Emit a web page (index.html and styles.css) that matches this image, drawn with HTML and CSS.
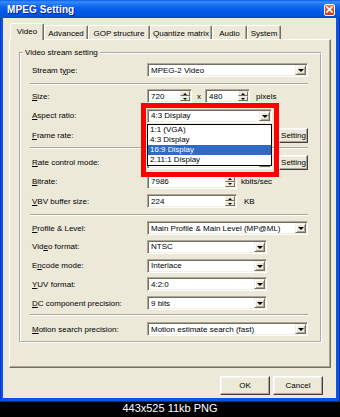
FILE: index.html
```html
<!DOCTYPE html>
<html>
<head>
<meta charset="utf-8">
<title>MPEG Setting</title>
<link rel="stylesheet" href="styles.css">
</head>
<body>
<div class="window">
  <div class="titlebar">
    <span class="title">MPEG Setting</span>
    <span class="close"><svg width="7" height="7" viewBox="0 0 7 7"><path d="M1 1L6 6M6 1L1 6" stroke="#fff" stroke-width="1.6" stroke-linecap="square"/></svg></span>
  </div>
  <div class="frame">
    <div class="client">
      <div class="tabs">
        <div class="tab active t-video">Video</div>
        <div class="tab t-adv">Advanced</div>
        <div class="tab t-gop">GOP structure</div>
        <div class="tab t-quant">Quantize matrix</div>
        <div class="tab t-audio">Audio</div>
        <div class="tab t-sys">System</div>
      </div>
      <div class="panel">
        <fieldset class="group">
          <legend>Video stream setting</legend>
          <div class="rows">
            <div class="sec s1">
              <div class="row"><span class="lbl">Stream t<u>y</u>pe:</span><div class="combo w-wide"><span class="val">MPEG-2 Video</span><span class="dd"></span></div></div>
            </div>
            <div class="sep sep1"></div>
            <div class="sec s2">
              <div class="row"><span class="lbl"><u>S</u>ize:</span><div class="spin w-size"><span class="val">720</span><span class="updown"><span class="up"></span><span class="down"></span></span></div><span class="unit u-x">x</span><div class="spin w-size"><span class="val">480</span><span class="updown"><span class="up"></span><span class="down"></span></span></div><span class="unit u-px">pixels</span></div>
              <div class="row"><span class="lbl"><u>A</u>spect ratio:</span><div class="combo w-mid"><span class="val">4:3 Display</span><span class="dd"></span></div></div>
              <div class="row"><span class="lbl"><u>F</u>rame rate:</span><div class="combo w-mid"><span class="val"></span><span class="dd"></span></div><button class="btn setting">Setting</button></div>
            </div>
            <div class="sep sep2"></div>
            <div class="sec s3">
              <div class="row"><span class="lbl"><u>R</u>ate control mode:</span><div class="combo w-mid"><span class="val"></span><span class="dd"></span></div><button class="btn setting">Setting</button></div>
              <div class="row"><span class="lbl"><u>B</u>itrate:</span><div class="spin w-rate"><span class="val">7986</span><span class="updown"><span class="up"></span><span class="down"></span></span></div><span class="unit u-kb">kbits/sec</span></div>
              <div class="row"><span class="lbl"><u>V</u>BV buffer size:</span><div class="spin w-rate"><span class="val">224</span><span class="updown"><span class="up"></span><span class="down"></span></span></div><span class="unit u-KB">KB</span></div>
            </div>
            <div class="sep sep3"></div>
            <div class="sec s4">
              <div class="row"><span class="lbl"><u>P</u>rofile &amp; Level:</span><div class="combo w-wide"><span class="val">Main Profile &amp; Main Level (MP@ML)</span><span class="dd"></span></div></div>
              <div class="row"><span class="lbl">Vid<u>e</u>o format:</span><div class="combo w-small"><span class="val">NTSC</span><span class="dd"></span></div></div>
              <div class="row"><span class="lbl">E<u>n</u>code mode:</span><div class="combo w-small"><span class="val">Interlace</span><span class="dd"></span></div></div>
              <div class="row"><span class="lbl"><u>Y</u>UV format:</span><div class="combo w-small"><span class="val">4:2:0</span><span class="dd"></span></div></div>
              <div class="row"><span class="lbl"><u>D</u>C component precision:</span><div class="combo w-small"><span class="val">9 bits</span><span class="dd"></span></div></div>
            </div>
            <div class="sep sep4"></div>
            <div class="sec s5">
              <div class="row"><span class="lbl"><u>M</u>otion search precision:</span><div class="combo w-wide"><span class="val">Motion estimate search (fast)</span><span class="dd"></span></div></div>
            </div>
          </div>
        </fieldset>
      </div>
      <div class="buttons">
        <button class="btn big">OK</button>
        <button class="btn big">Cancel</button>
      </div>
    </div>
  </div>
  <div class="droplist">
    <div class="item">1:1 (VGA)</div>
    <div class="item">4:3 Display</div>
    <div class="item sel">16:9 Display</div>
    <div class="item">2.11:1 Display</div>
  </div>
  <div class="redbox"></div>
</div>
<div class="caption">443x525 11kb PNG</div>
</body>
</html>
```

FILE: styles.css
```css
* { box-sizing: border-box; }
html, body { margin: 0; padding: 0; }
body {
  width: 340px;
  height: 417px;
  overflow: hidden;
  background: #000;
  font-family: "Liberation Sans", Arial, sans-serif;
  font-size: 8px;
  color: #000;
}

.window {
  position: relative;
  width: 340px;
  height: 402px;
  display: flex;
  flex-direction: column;
}

.titlebar {
  height: 18px;
  flex: 0 0 18px;
  display: flex;
  align-items: center;
  justify-content: space-between;
  padding: 0 5px 0 7px;
  background: linear-gradient(180deg, #0A5FEB 0px, #3C8DF7 2px, #2277F1 4px, #0A62EA 8px, #0058E6 12px, #0452DE 16px, #0349D2 18px);
}
.title {
  color: #fff;
  font-weight: bold;
  font-size: 10px;
  text-shadow: 1px 1px #0A2390;
  letter-spacing: 0.1px;
}
.close {
  width: 11px;
  height: 12px;
  margin-top: 1px;
  border: 1px solid #fff;
  border-radius: 2px;
  background: linear-gradient(180deg, #E8795A, #D84A22 60%, #C93E18);
  display: flex;
  align-items: center;
  justify-content: center;
}
.close svg { display: block; }

.frame {
  flex: 1;
  padding: 0 4px 4px 3px;
  background: #0A54E4;
  box-shadow: inset 1px 0 #0839C8, inset -1px 0 #0028A8, inset 0 -1px #0028A8;
}
.client {
  height: 100%;
  background: #ECE9D8;
  display: flex;
  flex-direction: column;
}

/* tabs */
.tabs {
  display: flex;
  align-items: flex-end;
  height: 16px;
  margin: 5px 0 0 7px;
}
.tab {
  height: 14px;
  padding-top: 1px;
  border: 1px solid;
  border-bottom: none;
  border-color: #fff #716F64 transparent #fff;
  border-radius: 2px 2px 0 0;
  box-shadow: inset -1px 0 #ACA899;
  display: flex;
  align-items: center;
  justify-content: center;
  white-space: nowrap;
  background: #ECE9D8;
}
.tab.active {
  height: 17px;
  margin-bottom: -1px;
  position: relative;
  z-index: 2;
  padding-top: 0;
  padding-bottom: 1px;
}
.t-video { width: 34px; }
.t-adv { width: 44px; }
.t-gop { width: 62px; }
.t-quant { width: 62px; }
.t-audio { width: 35px; }
.t-sys { width: 34px; }

.panel {
  width: 322px;
  height: 329px;
  margin-left: 6px;
  border: 1px solid;
  border-color: #fff #716F64 #716F64 #fff;
  box-shadow: inset -1px -1px #ACA899;
  display: flex;
  flex-direction: column;
}

.group {
  margin: 8px 8px 0 9px;
  padding: 0;
  min-width: 0;
  border: 2px groove #fff;
}
.group legend {
  margin-left: 2px;
  padding: 0 2px;
  font-size: 8px;
  line-height: 10px;
}
.rows {
  padding: 5px 12px 5px 9px;
}
.sec {
  display: flex;
  flex-direction: column;
}
.s2, .s3 { gap: 5.5px; }
.s4 { gap: 4.75px; }

.sep {
  height: 2px;
  border-top: 1px solid #ACA899;
  border-bottom: 1px solid #fff;
}
.sep1 { margin: 6px 0 4px; }
.sep2 { margin: 5px 0 6px; }
.sep3 { margin: 6px 0 5px; }
.sep4 { margin: 4px 0 6px; }

.row {
  display: flex;
  align-items: center;
  height: 14px;
}
.lbl {
  flex: 0 0 117px;
  padding-left: 2px;
  white-space: nowrap;
}

.combo, .spin {
  height: 14px;
  background: #fff;
  border: 1px solid;
  border-color: #ACA899 #fff #fff #ACA899;
  box-shadow: inset 1px 1px #716F64, inset -1px -1px #F1EFE2;
  display: flex;
  align-items: center;
  padding-left: 2px;
  flex: 0 0 auto;
}
.val {
  flex: 1;
  min-width: 0;
  overflow: hidden;
  white-space: nowrap;
  padding-left: 1px;
}
.w-wide { width: 161px; }
.w-mid { width: 125px; }
.w-small { width: 120px; }
.w-size { width: 45px; }
.w-rate { width: 90px; }

.dd {
  flex: 0 0 11px;
  height: 10px;
  margin-right: 1px;
  background: #ECE9D8;
  border: 1px solid;
  border-color: #F1EFE2 #716F64 #716F64 #F1EFE2;
  box-shadow: inset 1px 1px #fff, inset -1px -1px #ACA899;
  display: flex;
  align-items: center;
  justify-content: center;
}
.dd::after {
  content: "";
  border-left: 3px solid transparent;
  border-right: 3px solid transparent;
  border-top: 3px solid #000;
  margin-top: 1px;
}

.updown {
  flex: 0 0 10px;
  height: 10px;
  margin-right: 1px;
  display: flex;
  flex-direction: column;
}
.updown span {
  flex: 1;
  background: #ECE9D8;
  border: 1px solid;
  border-color: #F1EFE2 #716F64 #716F64 #F1EFE2;
  display: flex;
  align-items: center;
  justify-content: center;
}
.updown .up::after {
  content: "";
  border-left: 2.5px solid transparent;
  border-right: 2.5px solid transparent;
  border-bottom: 2.5px solid #000;
}
.updown .down::after {
  content: "";
  border-left: 2.5px solid transparent;
  border-right: 2.5px solid transparent;
  border-top: 2.5px solid #000;
}

.unit { white-space: nowrap; }
.u-x { margin: 0 4px 0 5px; }
.u-px { margin-left: 6px; }
.u-kb { margin-left: 4px; }
.u-KB { margin-left: 7px; }

.btn {
  font-family: "Liberation Sans", Arial, sans-serif;
  font-size: 8px;
  color: #000;
  background: #ECE9D8;
  border: 1px solid;
  border-color: #fff #404040 #404040 #fff;
  box-shadow: inset -1px -1px #ACA899, inset 1px 1px #F6F5EF;
  padding: 0;
  margin: 0;
  display: flex;
  align-items: center;
  justify-content: center;
}
.setting {
  width: 29px;
  height: 15px;
  margin-left: 7px;
}

.buttons {
  display: flex;
  justify-content: flex-end;
  gap: 3px;
  margin-top: 8px;
  padding-right: 13px;
}
.big {
  width: 50px;
  height: 19px;
}

/* open dropdown list (overlay) */
.droplist {
  position: absolute;
  left: 147px;
  top: 124px;
  width: 125px;
  border: 1px solid #000;
  background: #fff;
  z-index: 5;
}
.item {
  height: 10px;
  line-height: 10px;
  padding-left: 2px;
  white-space: nowrap;
}
.item.sel {
  background: #316AC5;
  color: #fff;
}

/* red highlight annotation */
.redbox {
  position: absolute;
  left: 141px;
  top: 103px;
  width: 138px;
  height: 74px;
  border: 5px solid #F00;
  z-index: 6;
}

.caption {
  height: 15px;
  line-height: 13px;
  color: #fff;
  font-size: 11px;
  text-align: center;
  background: #000;
}
```
